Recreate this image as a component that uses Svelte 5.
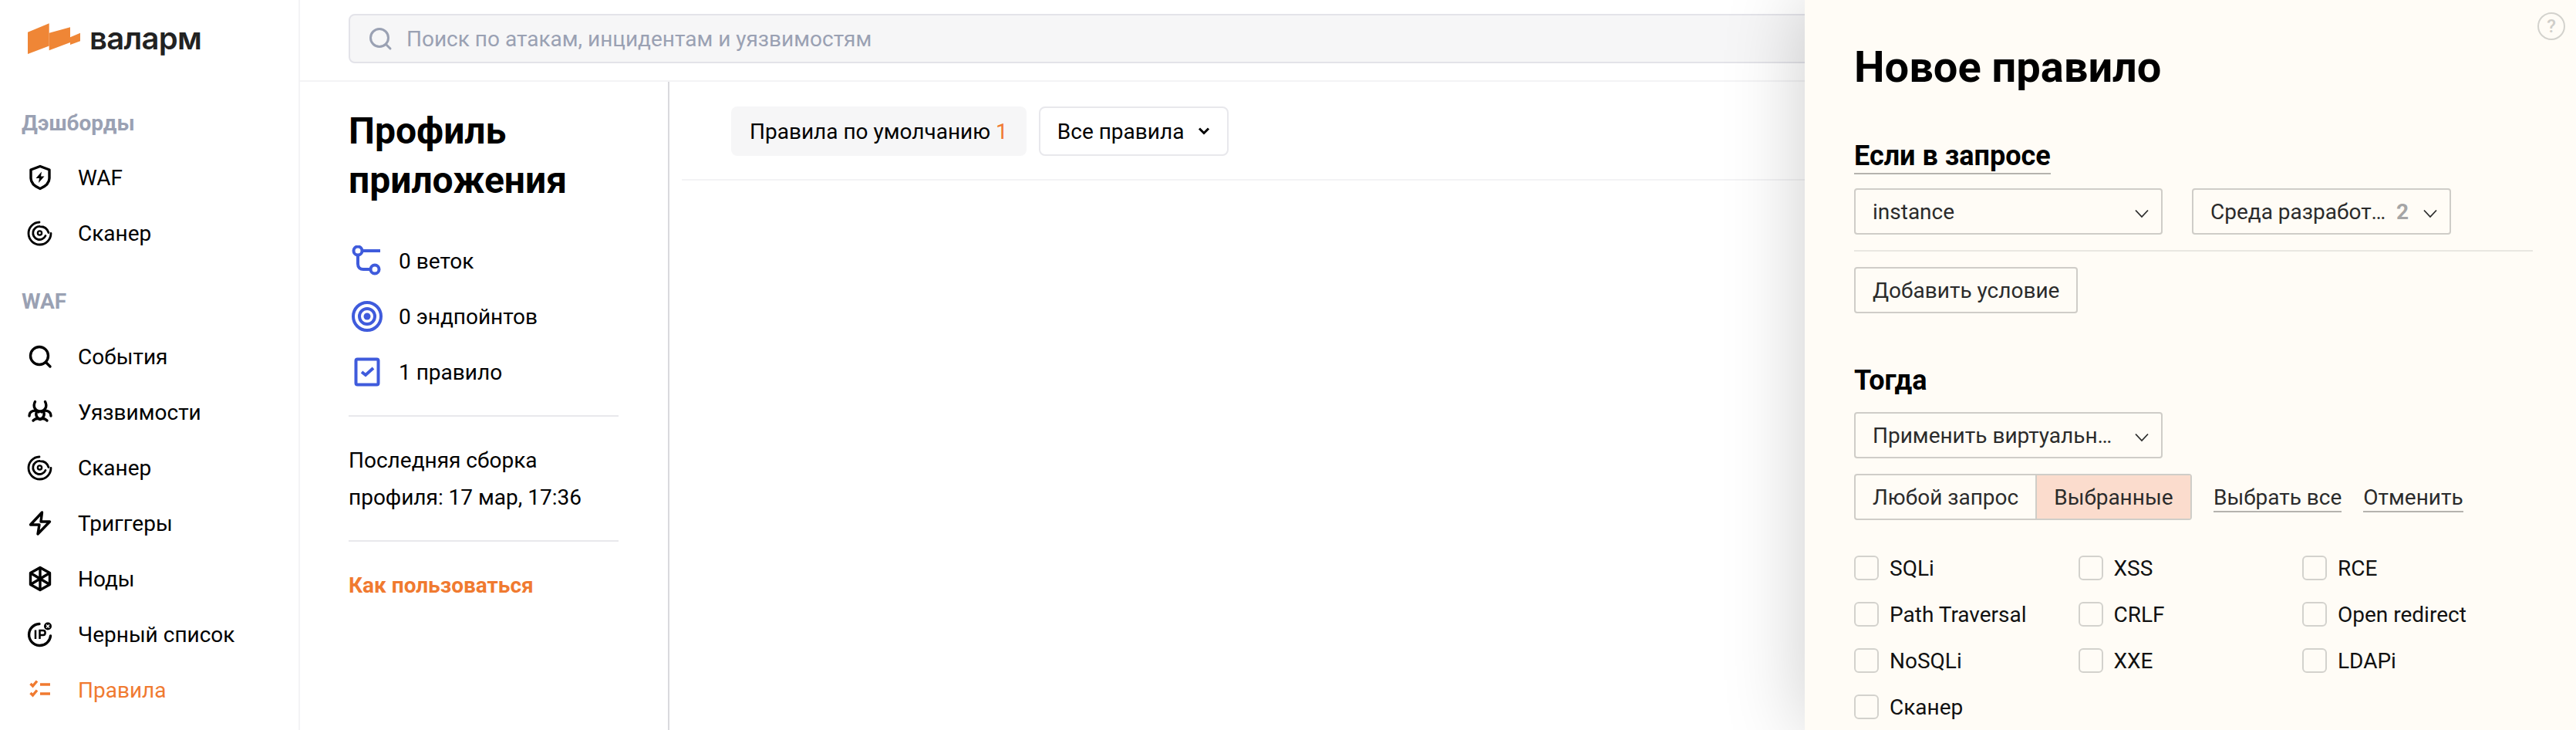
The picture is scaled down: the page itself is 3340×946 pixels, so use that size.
<script>
  const dash = [
    { icon: 'shield', label: 'WAF' },
    { icon: 'scan', label: 'Сканер' }
  ];
  const waf = [
    { icon: 'search', label: 'События' },
    { icon: 'bio', label: 'Уязвимости' },
    { icon: 'scan', label: 'Сканер' },
    { icon: 'bolt', label: 'Триггеры' },
    { icon: 'hex', label: 'Ноды' },
    { icon: 'ip', label: 'Черный список' },
    { icon: 'rules', label: 'Правила', active: true }
  ];
  const stats = [
    { icon: 'branch', label: '0 веток' },
    { icon: 'target', label: '0 эндпойнтов' },
    { icon: 'check', label: '1 правило' }
  ];
  const attacks = ['SQLi', 'XSS', 'RCE', 'Path Traversal', 'CRLF', 'Open redirect', 'NoSQLi', 'XXE', 'LDAPi', 'Сканер'];
</script>

{#snippet icon(name)}
  <svg class="ico" width="40" height="40" viewBox="0 0 40 40" fill="none" stroke="currentColor">
    {#if name === 'shield'}
      <path d="M20 5.5 L32 10 V21 C32 27 27 31.5 20 34.5 C13 31.5 8 27 8 21 V10 Z" stroke-linejoin="round" />
      <path d="M22 12.5 L14.5 21 H19 L18 27 L25.5 18.5 H21 Z" fill="currentColor" stroke="none" />
    {:else if name === 'scan'}
      <path d="M34 20.5 A14.5 14.5 0 1 1 19 6" stroke-linecap="round" stroke-width="2.8" />
      <path d="M27 23.5 A8.5 8.5 0 1 1 20 11.5 C25.5 11.5 29.5 15 31 19.5" stroke-linecap="round" stroke-width="2.8" />
      <circle cx="19.5" cy="20" r="2.6" stroke-width="2.4" />
    {:else if name === 'search'}
      <circle cx="19" cy="19" r="11.5" />
      <path d="M27.5 27.5 L33 33" stroke-linecap="round" />
    {:else if name === 'bio'}
      <path d="M13.5 6.5 C10 13 14 19 20 19 C26 19 30 13 26.5 6.5" stroke-linecap="round" />
      <path d="M6 25 C6 19 13 16 18 20" stroke-linecap="round" />
      <path d="M34 25 C34 19 27 16 22 20" stroke-linecap="round" />
      <path d="M15 21 C14 26 18 29 20 29 C22 29 26 26 25 21" stroke-linecap="round" />
      <path d="M11 31 C14 28 17 28 20 29.5 C23 28 26 28 29 31" stroke-linecap="round" />
    {:else if name === 'bolt'}
      <path d="M22.5 6 L7.5 22 H19 L17 34 L32.5 18 H21 Z" stroke-linejoin="round" />
    {:else if name === 'hex'}
      <path d="M20 5.5 L32.5 12.5 V27.5 L20 34.5 L7.5 27.5 V12.5 Z" stroke-linejoin="round" />
      <path d="M20 5.5 V34.5 M7.5 12.5 L32.5 27.5 M32.5 12.5 L7.5 27.5" />
    {:else if name === 'ip'}
      <path d="M33.5 22 A14 14 0 1 1 19 6.5" stroke-linecap="round" />
      <path d="M14 14.5 V26 M19.5 26 V15 H24 C27.5 15 27.5 21 24 21 H19.5" stroke-width="2.5" />
      <circle cx="30" cy="9.5" r="5" fill="currentColor" stroke="none" />
      <path d="M28 7.5 L32 11.5 M32 7.5 L28 11.5" stroke="#fff" stroke-width="1.5" />
    {:else if name === 'rules'}
      <path d="M7.5 12 L10.5 15 L16 8.5 M7.5 24 L10.5 27 L16 20.5" />
      <path d="M20 13 H33 M20 25 H33" />
    {:else if name === 'branch'}
      <circle cx="8" cy="7" r="5.5" />
      <circle cx="30" cy="31" r="5.5" />
      <path d="M13.5 7 H37 M8 12.5 V24 C8 28.5 11 31 15 31 H24.5" />
    {:else if name === 'target'}
      <circle cx="20" cy="20" r="18" />
      <circle cx="20" cy="20" r="10" />
      <circle cx="20" cy="20" r="4.5" fill="currentColor" stroke="none" />
    {:else if name === 'check'}
      <rect x="5.5" y="3.5" width="29" height="33" rx="2" />
      <path d="M13 20 L18 24 L28 15" />
    {/if}
  </svg>
{/snippet}

{#snippet chevron()}
  <svg class="chev" width="18" height="12" viewBox="0 0 18 12" fill="none" stroke="#2b2b2b" stroke-width="1.8"><path d="M1 1.5 L9 10 L17 1.5" /></svg>
{/snippet}

<div class="page">
  <aside class="side">
    <div class="logo">
      <svg width="70" height="42" viewBox="0 0 70 42" fill="#ef8636">
        <polygon points="0,12.7 27.7,1.3 27.7,30.5 0,41" />
        <polygon points="27.7,13.7 55,6.3 55,26 27.7,36.3" />
        <polygon points="55,19.3 68,13.7 68,24.3 55,29" />
      </svg>
      <span class="word">валарм</span>
    </div>
    <div class="group first">Дэшборды</div>
    {#each dash as item}
      <div class="nav">{@render icon(item.icon)}<span>{item.label}</span></div>
    {/each}
    <div class="group">WAF</div>
    {#each waf as item}
      <div class="nav" class:active={item.active}>{@render icon(item.icon)}<span>{item.label}</span></div>
    {/each}
  </aside>

  <main class="main">
    <header class="top">
      <div class="search">
        <svg width="34" height="34" viewBox="0 0 34 34" fill="none" stroke="#9aa1b3" stroke-width="3">
          <circle cx="16" cy="16" r="11.5" /><path d="M24.5 24.5 L30 30" stroke-linecap="round" />
        </svg>
        <span>Поиск по атакам, инцидентам и уязвимостям</span>
      </div>
    </header>
    <div class="body">
      <section class="profile">
        <h1>Профиль<br />приложения</h1>
        <ul class="stats">
          {#each stats as s}
            <li>{@render icon(s.icon)}<span>{s.label}</span></li>
          {/each}
        </ul>
        <p class="build">Последняя сборка<br />профиля: 17 мар, 17:36</p>
        <div class="how">Как пользоваться</div>
      </section>
      <section class="rules">
        <div class="bar">
          <div class="tab">Правила по умолчанию <em>1</em></div>
          <div class="drop">
            <span>Все правила</span>
            <svg width="16" height="10" viewBox="0 0 16 10" fill="none" stroke="#000" stroke-width="3"><path d="M2 1.5 L8 7.5 L14 1.5" /></svg>
          </div>
        </div>
      </section>
    </div>
  </main>

  <div class="panel">
    <div class="help">?</div>
    <h2>Новое правило</h2>
    <h3 class="under">Если в запросе</h3>
    <div class="row">
      <div class="select w400"><span class="val">instance</span>{@render chevron()}</div>
      <div class="select w336"><span class="val">Среда разработ…</span><b>2</b>{@render chevron()}</div>
    </div>
    <div class="hr"></div>
    <div class="btn">Добавить условие</div>
    <h3 class="then">Тогда</h3>
    <div class="select w400"><span class="val">Применить виртуальн…</span>{@render chevron()}</div>
    <div class="row seg-row">
      <div class="seg"><div class="opt">Любой запрос</div><div class="opt on">Выбранные</div></div>
      <a class="link" href="#a">Выбрать все</a>
      <a class="link" href="#b">Отменить</a>
    </div>
    <div class="checks">
      {#each attacks as a}
        <label class="chk"><i></i><span>{a}</span></label>
      {/each}
    </div>
  </div>
</div>

<style>
  :global(body) { margin: 0; background: #fff; }
  .page {
    position: relative;
    display: flex;
    width: 3340px;
    height: 946px;
    overflow: hidden;
    font-family: Roboto, "Liberation Sans", sans-serif;
    font-size: 28px;
    color: #000;
  }
  .side { width: 387px; flex: none; border-right: 2px solid #f3f3f5; }
  .logo { display: flex; align-items: center; gap: 10px; height: 100px; padding-left: 36px; }
  .word { font-family: Inter, sans-serif; font-weight: 600; font-size: 40px; color: #222; letter-spacing: -0.7px; margin-top: -2px; }
  .group {
    height: 71px;
    margin-top: 17px;
    padding-left: 28px;
    display: flex;
    align-items: center;
    font-weight: 700;
    color: #9aa1b3;
  }
  .group.first { margin-top: 24px; height: 70px; }
  .nav { height: 72px; display: flex; align-items: center; padding-left: 32px; gap: 29px; }
  .nav.active { color: #f07a30; }
  .ico { flex: none; display: block; stroke-width: 3.4; }

  .main { flex: 1; min-width: 0; }
  .top { height: 86px; border-bottom: 2px solid #f3f3f5; padding: 18px 0 0 63px; }
  .search {
    height: 60px;
    background: #f6f6f7;
    border: 2px solid #e3e3e9;
    border-radius: 8px;
    display: flex;
    align-items: center;
    padding-left: 22px;
    gap: 17px;
    color: #9aa1b3;
    width: 2880px;
  }
  .body { display: flex; height: 840px; }
  .profile { width: 414px; flex: none; padding-left: 63px; border-right: 2px solid #d9d9dd; }
  h1 { margin: 32px 0 0; font-size: 48px; line-height: 64px; font-weight: 700; }
  .stats { list-style: none; margin: 36px 0 0; padding: 0 0 20px; width: 350px; border-bottom: 2px solid #e8e8ec; }
  .stats li { height: 72px; display: flex; align-items: center; gap: 21px; padding-left: 4px; }
  .stats .ico { color: #3f5bdc; stroke-width: 4; }
  .build { margin: 0; width: 350px; padding: 33px 0 31px; line-height: 48px; border-bottom: 2px solid #e8e8ec; }
  .how { margin-top: 39px; color: #f07a30; font-weight: 700; line-height: 36px; }
  .rules { flex: 1; padding-left: 16px; }
  .bar { height: 124px; padding-top: 2px; border-bottom: 2px solid #f3f3f5; display: flex; align-items: center; gap: 16px; padding-left: 64px; }
  .tab { height: 64px; background: #f6f6f7; border-radius: 8px; padding: 0 24px; display: flex; align-items: center; white-space: pre; }
  .tab em { font-style: normal; color: #f07a30; }
  .drop { height: 60px; border: 2px solid #e8e8ec; border-radius: 8px; padding: 0 22px; display: flex; align-items: center; gap: 18px; }

  .panel {
    position: absolute;
    top: 0; right: 0; bottom: 0;
    width: 1000px;
    box-sizing: border-box;
    padding-left: 64px;
    background: #fffcf6;
    box-shadow: 0 0 100px rgba(0, 0, 0, 0.2);
    color: #2b2b2b;
  }
  .help {
    position: absolute;
    top: 16px; right: 14px;
    width: 36px; height: 36px;
    box-sizing: border-box;
    border: 2px solid #d3d2cd;
    border-radius: 50%;
    display: flex; align-items: center; justify-content: center;
    font-size: 24px;
    font-weight: 500;
    color: #cfcec9;
  }
  h2 { margin: 54px 0 0; font-size: 56px; line-height: 66px; font-weight: 700; color: #000; }
  h3 { margin: 0; font-size: 36px; line-height: 44px; font-weight: 700; color: #000; }
  .under { width: fit-content; margin-top: 60px; border-bottom: 2px solid #b5b3ae; }
  .row { display: flex; align-items: center; }
  .under + .row { margin-top: 18px; gap: 38px; }
  .select {
    height: 60px;
    box-sizing: border-box;
    border: 2px solid #cfcdc8;
    border-radius: 4px;
    display: flex;
    align-items: center;
    padding: 0 16px 0 22px;
  }
  .w400 { width: 400px; }
  .w336 { width: 336px; }
  .val { flex: 1; min-width: 0; white-space: nowrap; padding-top: 1px; }
  .select b { color: #a5a5a5; margin: 0 19px 0 13px; }
  .select .chev { flex: none; margin-left: 18px; margin-top: 6px; }
  .select b + .chev { margin-left: 0; }
  .hr { height: 2px; width: 880px; background: #e9e7e1; margin: 20px 0; }
  .btn {
    display: flex;
    width: fit-content;
    align-items: center;
    height: 60px;
    box-sizing: border-box;
    padding: 0 22px;
    border: 2px solid #cfcdc8;
    border-radius: 4px;
  }
  .then { margin-top: 65px; margin-bottom: 19px; }
  .seg-row { margin-top: 20px; }
  .seg { display: flex; height: 60px; box-sizing: border-box; border: 2px solid #cfcdc8; border-radius: 4px; width: 438px; }
  .opt { display: flex; align-items: center; padding: 0 22px; }
  .opt.on { flex: 1; background: #fbdccd; border-left: 2px solid #cfcdc8; padding: 0 0 0 22px; }
  .link { color: #2b2b2b; text-decoration: none; border-bottom: 2px solid #b5b3ae; margin-left: 28px; line-height: 34px; margin-top: 4px; }
  .checks { display: grid; grid-template-columns: repeat(3, 290.5px); grid-auto-rows: 60px; margin-top: 46px; }
  .chk { display: flex; align-items: flex-start; gap: 14px; color: #111; }
  .chk i { width: 32px; height: 32px; box-sizing: border-box; border: 2px solid #d3d2cd; border-radius: 6px; flex: none; }
  .chk span { line-height: 34px; }
</style>
